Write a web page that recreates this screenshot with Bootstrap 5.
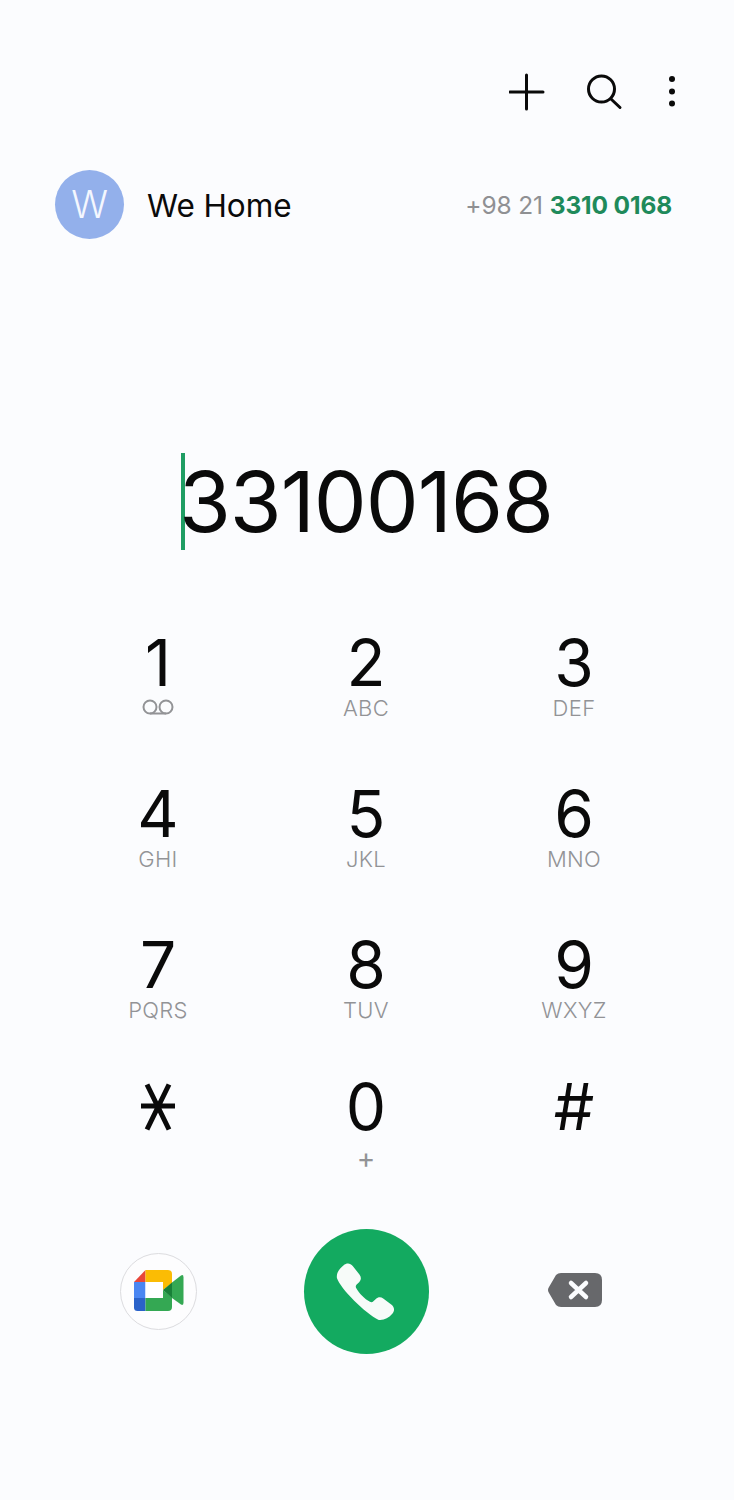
<!DOCTYPE html>
<html lang="en">
<head>
<meta charset="utf-8">
<title>Phone</title>
<link rel="stylesheet" href="https://cdn.jsdelivr.net/npm/bootstrap@5.3.0/dist/css/bootstrap.min.css">
<style>
html,body{background:#fbfcfe;}
body{font-family:Inter,"Noto Sans",sans-serif;color:#0a0a0a;}
.dial-page{width:734px;height:1500px;overflow:hidden;}
.top-actions{padding:73px 58px 0 0;height:170px;}
.act-search{margin-left:42px;}
.act-more{margin-left:45px;}
.contact-row{height:69px;padding:0 62px 0 55px;}
.avatar-disc{width:69px;height:69px;background:#93b0eb;color:#f4f7fe;font-size:38px;font-weight:300;}
.contact-name{font-size:31.5px;margin:2px 0 0 23px;letter-spacing:-.05px;}
.contact-num{font-size:24.5px;color:#8f9093;letter-spacing:-.13px;margin-top:2px;}
.contact-num b{color:#1f8a5b;font-weight:700;}
.dial-row{margin-top:214px;height:97px;}
.dial-value{font-size:84px;line-height:97px;letter-spacing:-1px;font-weight:400;}
.caret-bar{width:4px;height:97px;background:#1f9d63;margin-right:-6px;}
.pad-grid{display:grid;grid-template-columns:repeat(3,208px);margin:78px 0 0 54px;}
.pad-key{height:151px;text-align:center;padding-top:1px;}
.pad-key.short-row{height:142px;}
.pad-key.last-row{height:141px;}
.key-digit{display:block;font-size:64px;line-height:68px;height:68px;font-weight:400;}
.key-sub{display:block;font-size:22px;line-height:22px;color:#929396;letter-spacing:.3px;font-weight:300;}
.key-plus{display:block;font-size:28px;line-height:22px;margin-top:6px;color:#929396;font-weight:400;}
.vm-icon{margin-top:1px;}
.glyph-box{height:68px;}
.call-row{display:grid;grid-template-columns:repeat(3,208px);margin-left:54px;height:125px;margin-top:16px;}
.meet-disc{width:77px;height:77px;border:1px solid #dcdcdf;background:#fdfdfe;}
.meet-icon{margin:-2px 0 0 2px;}
.call-disc{width:125px;height:125px;background:#13aa60;border:0;}
.del-icon{margin:-3px 0 0 2px;}
</style>
</head>
<body class="m-0">
<div class="dial-page">
  <div class="top-actions d-flex justify-content-end align-items-start">
    <svg width="36" height="38" viewBox="0 0 36 38" fill="none" stroke="#0a0a0a" stroke-width="3" stroke-linecap="round" aria-label="Add"><path d="M17.500 2v34M1 19h33"/></svg>
    <svg class="act-search" width="36" height="38" viewBox="0 0 36 38" fill="none" stroke="#0a0a0a" stroke-width="3" stroke-linecap="round" aria-label="Search"><circle cx="14.500" cy="16" r="13"/><path d="M24 26 33 34.500"/></svg>
    <svg class="act-more" width="8" height="38" viewBox="0 0 8 38" fill="#0a0a0a" aria-label="More"><circle cx="4" cy="6" r="3"/><circle cx="4" cy="18.500" r="3"/><circle cx="4" cy="30.500" r="3"/></svg>
  </div>

  <div class="contact-row d-flex align-items-center">
    <div class="avatar-disc rounded-circle d-flex align-items-center justify-content-center flex-shrink-0">W</div>
    <div class="contact-name">We Home</div>
    <div class="contact-num ms-auto">+98 21 <b>3310 0168</b></div>
  </div>

  <div class="dial-row d-flex justify-content-center align-items-center">
    <span class="caret-bar"></span><span class="dial-value">33100168</span>
  </div>

  <div class="pad-grid">
    <div class="pad-key"><span class="key-digit">1</span>
      <svg class="vm-icon d-block mx-auto" width="34" height="24" viewBox="0 0 34 24" fill="none" stroke="#929396" stroke-width="2"><circle cx="9" cy="9" r="6.500"/><circle cx="25" cy="9" r="6.500"/><path d="M9 15.500h16"/></svg></div>
    <div class="pad-key"><span class="key-digit">2</span><span class="key-sub">ABC</span></div>
    <div class="pad-key"><span class="key-digit">3</span><span class="key-sub">DEF</span></div>
    <div class="pad-key"><span class="key-digit">4</span><span class="key-sub">GHI</span></div>
    <div class="pad-key"><span class="key-digit">5</span><span class="key-sub">JKL</span></div>
    <div class="pad-key"><span class="key-digit">6</span><span class="key-sub">MNO</span></div>
    <div class="pad-key short-row"><span class="key-digit">7</span><span class="key-sub">PQRS</span></div>
    <div class="pad-key short-row"><span class="key-digit">8</span><span class="key-sub">TUV</span></div>
    <div class="pad-key short-row"><span class="key-digit">9</span><span class="key-sub">WXYZ</span></div>
    <div class="pad-key last-row"><div class="glyph-box d-flex align-items-center justify-content-center">
      <svg width="34" height="48" viewBox="0 0 34 48" stroke="#0a0a0a" stroke-width="5" aria-label="Star"><path d="M0 23h34M6 1.500l22 45M28 1.500 6 46.500"/></svg></div></div>
    <div class="pad-key last-row"><span class="key-digit">0</span><span class="key-plus">+</span></div>
    <div class="pad-key last-row"><span class="key-digit">#</span></div>
  </div>

  <div class="call-row">
    <div class="d-flex align-items-center justify-content-center">
      <div class="meet-disc rounded-circle d-flex align-items-center justify-content-center">
        <svg class="meet-icon" width="50" height="41" viewBox="0 0 50 41" aria-label="Google Meet">
          <path d="M0 12 11.500 0V12z" fill="#e8473a"/>
          <path d="M0 12h11.500v16H0z" fill="#4a86f2"/>
          <path d="M0 28h11.500v13H3.500A3.500 3.500 0 0 1 0 37.500z" fill="#2a62c9"/>
          <path d="M11.500 0H34a4 4 0 0 1 4 4v9L29 20V12H11.500z" fill="#fbbc04"/>
          <path d="M11.500 12H29v16H11.500z" fill="#fff"/>
          <path d="M11.500 28H29v-8l9 7.500V37a4 4 0 0 1-4 4H11.500z" fill="#34a853"/>
          <path d="M29 20 38 12.500V28z" fill="#188038"/>
          <path d="M38 12.500 47 5.500Q49.500 4 49.500 7.500V32.500Q49.500 36 47 34.500L38 28z" fill="#34a853"/>
        </svg>
      </div>
    </div>
    <div class="d-flex align-items-center justify-content-center">
      <button class="call-disc rounded-circle d-flex align-items-center justify-content-center p-0" aria-label="Call">
        <svg width="60" height="59" viewBox="0 0 60 60"><path d="M7 3.500c3.500-3 7-2.500 9.500.5l7 9c2 2.500 1.500 5.500-.5 7.500l-2.500 2.500c-1 1-1.200 2-.5 3.500 3 5.500 8.500 11 14 14 1.500.7 2.500.5 3.500-.5l2.500-2.500c2-2 5-2.500 7.500-.5l8.500 6.500c3 2.500 3.500 6 .5 9.500-3.500 4-8 6.500-13.500 6C29 52 4 27 .5 16.500-.5 11 3 7 7 3.500z" fill="#f7fbf9"/></svg>
      </button>
    </div>
    <div class="d-flex align-items-center justify-content-center">
      <svg class="del-icon" width="56" height="36" viewBox="0 0 56 36" aria-label="Delete"><path d="M14 1H48Q55 1 55 8V28Q55 35 48 35H14Q11 35 9 33L2 21Q0 18 2 15L9 3Q11 1 14 1z" fill="#67686b"/><path d="M24 11 39 25M39 11 24 25" stroke="#fbfcfe" stroke-width="4.500" stroke-linecap="round"/></svg>
    </div>
  </div>
</div>
<script src="https://cdn.jsdelivr.net/npm/bootstrap@5.3.0/dist/js/bootstrap.bundle.min.js"></script>
</body>
</html>
